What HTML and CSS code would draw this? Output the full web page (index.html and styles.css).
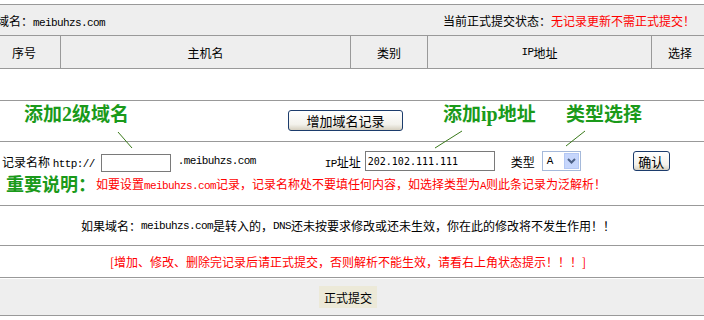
FILE: index.html
```html
<!DOCTYPE html>
<html>
<head>
  <meta charset="utf-8" />
  <title>域名解析</title>
  <link rel="stylesheet" href="styles.css">
</head>
<body>
  <div class="wrap">
    <!-- Kopfzeile: Domain + Status -->
    <div class="bar">
      <span>域名：<span class="en">meibuhzs.com</span></span>
      <span>当前正式提交状态：<span class="red">无记录更新不需正式提交！</span></span>
    </div>

    <!-- Tabellenkopf -->
    <div class="thead">
      <div>序号</div>
      <div>主机名</div>
      <div>类别</div>
      <div><span class="en">IP</span>地址</div>
      <div>选择</div>
    </div>
    <div class="empty"></div>

    <!-- Hinweise + Button -->
    <div class="add-row">
      <span class="tip tip-name">添加<span class="num">2</span>级域名</span>
      <button class="btn btn-add">增加域名记录</button>
      <span class="tip tip-ip">添加<span class="num">ip</span>地址</span>
      <span class="tip tip-type">类型选择</span>
    </div>

    <!-- Formular -->
    <div class="form-row">
      <div class="fields">
        <span class="lbl-name">记录名称 <span class="en">http://</span></span>
        <input type="text" class="box box-name" />
        <span class="en suffix">.meibuhzs.com</span>
        <span class="lbl-ip"><span class="en">IP</span>址址</span>
        <input type="text" class="box box-ip" value="202.102.111.111" />
        <span class="lbl-type">类型</span>
        <span class="select">
          <span class="sel-val">A</span>
          <span class="sel-btn">
            <svg width="9" height="6" viewBox="0 0 9 6"><path d="M1 1 L4.5 4.5 L8 1" fill="none" stroke="#4d6185" stroke-width="2"/></svg>
          </span>
        </span>
        <button class="btn btn-ok">确认</button>
      </div>
      <div class="note">
        <span class="note-title">重要说明：</span><span class="red">如要设置<span class="en">meibuhzs.com</span>记录，记录名称处不要填任何内容，如选择类型为<span class="en">A</span>则此条记录为泛解析！</span>
      </div>
    </div>

    <div class="warn">如果域名：<span class="en">meibuhzs.com</span>是转入的，<span class="en">DNS</span>还未按要求修改或还未生效，你在此的修改将不发生作用！！</div>
    <div class="notice red">[增加、修改、删除完记录后请正式提交，否则解析不能生效，请看右上角状态提示！！！]</div>

    <div class="submit-row">
      <button class="submit">正式提交</button>
    </div>

    <!-- Zeigerlinien der Hinweise -->
    <svg class="pointers" width="720" height="320">
      <line x1="130" y1="132" x2="144" y2="148" />
      <line x1="474" y1="131" x2="447" y2="148" />
      <line x1="597" y1="131" x2="578" y2="146" />
    </svg>
  </div>
</body>
</html>
```

FILE: styles.css
```css
html, body {
  margin: 0;
  padding: 0;
  background: #fff;
  font-family: "Noto Sans CJK SC", sans-serif;
  font-size: 12px;
  color: #000;
  overflow: hidden;
}

/* Seite ist breiter als der Ausschnitt */
.wrap {
  position: relative;
  width: 720px;
  margin-left: -12px;
  padding-top: 4px;
}

.en {
  font-family: "Liberation Mono", monospace;
  font-size: 11px;
  letter-spacing: -0.6px;
}

.red {
  color: #f00;
}

.bar {
  display: flex;
  justify-content: space-between;
  align-items: center;
  height: 30px;
  padding: 0 13px 0 9px;
  background: #eee;
  border-top: 1px solid #999;
  border-bottom: 1px solid #999;
}

/* Tabellenkopf */
.thead {
  display: grid;
  grid-template-columns: 72px 290px 77px 224px 57px;
  height: 32px;
  background: #eee;
  border-bottom: 1px solid #999;
}

.thead div {
  display: flex;
  align-items: center;
  justify-content: center;
  box-sizing: border-box;
}

.thead div + div {
  border-left: 1px solid #999;
}

.empty {
  height: 31px;
  border-bottom: 1px solid #999;
}

/* Hinweiszeile */
.add-row {
  display: flex;
  align-items: flex-start;
  height: 40px;
  padding-left: 36px;
  border-bottom: 1px solid #999;
}

.tip {
  color: #1a9a1a;
  font-size: 19px;
  font-weight: 700;
  line-height: 20px;
  margin-top: 2px;
  white-space: nowrap;
}

.tip .num {
  font-family: "Liberation Serif", serif;
  font-size: 20px;
}

.tip-name {
  width: 264px;
}

.tip-ip {
  width: 123px;
  margin-left: 40px;
}

.btn {
  font-family: "Noto Sans CJK SC", sans-serif;
  font-size: 13px;
  line-height: 1;
  color: #000;
  padding: 0;
  border: 1px solid #1c3c6c;
  border-radius: 3px;
  background: linear-gradient(#fff, #f3f2ec 70%, #d6d0c0);
  cursor: pointer;
}

.btn-add {
  width: 115px;
  height: 21px;
  margin-top: 9px;
}

/* Formular */
.form-row {
  height: 55px;
  padding-left: 14px;
  border-bottom: 1px solid #999;
}

.fields {
  display: flex;
  align-items: center;
  height: 22px;
  margin-top: 8px;
  white-space: nowrap;
}

.box {
  box-sizing: border-box;
  margin: 0;
  padding: 0 2px;
  border: 1px solid #7a7a7a;
  background: #fff;
  font-family: "DejaVu Sans Mono", monospace;
  font-size: 10px;
  outline: none;
}

.box-name {
  width: 70px;
  height: 18px;
  margin-left: 6px;
  margin-top: 3px;
}

.suffix {
  margin-left: 7px;
}

.lbl-ip {
  margin-left: 69px;
}

.box-ip {
  width: 130px;
  height: 20px;
  margin-left: 4px;
}

.lbl-type {
  margin-left: 16px;
}

.select {
  display: flex;
  align-items: center;
  justify-content: space-between;
  box-sizing: border-box;
  width: 39px;
  height: 20px;
  margin-left: 7px;
  padding: 1px;
  border: 1px solid #a5b9da;
  background: #fff;
}

.sel-val {
  font-family: "Liberation Mono", monospace;
  font-size: 11px;
  padding-left: 3px;
}

.sel-btn {
  display: flex;
  align-items: center;
  justify-content: center;
  width: 15px;
  height: 16px;
  background: #c6d6fc;
  border: 1px solid #b4c8f4;
  box-sizing: border-box;
}

.btn-ok {
  width: 37px;
  height: 20px;
  margin-left: 52px;
}

.note {
  display: flex;
  align-items: center;
  height: 20px;
  padding-left: 4px;
  margin-top: 1px;
  white-space: nowrap;
}

.note-title {
  flex-shrink: 0;
  color: #1a9a1a;
  font-size: 18px;
  font-weight: 700;
}

/* Hinweistexte */
.warn {
  display: flex;
  align-items: center;
  justify-content: center;
  height: 39px;
  border-bottom: 1px solid #999;
}

.notice {
  display: flex;
  align-items: center;
  justify-content: center;
  height: 31px;
  border-bottom: 1px solid #999;
}

.submit-row {
  display: flex;
  align-items: center;
  justify-content: center;
  height: 36px;
  margin-top: 1px;
  background: #eee;
  border-bottom: 1px solid #999;
}

.submit {
  width: 58px;
  height: 22px;
  padding: 0;
  border: none;
  background: #ece9d8;
  font-family: "Noto Sans CJK SC", sans-serif;
  font-size: 12px;
  color: #000;
}

.pointers {
  position: absolute;
  left: 0;
  top: 0;
  pointer-events: none;
}

.pointers line {
  stroke: #3a7a1a;
  stroke-width: 1;
}
```
